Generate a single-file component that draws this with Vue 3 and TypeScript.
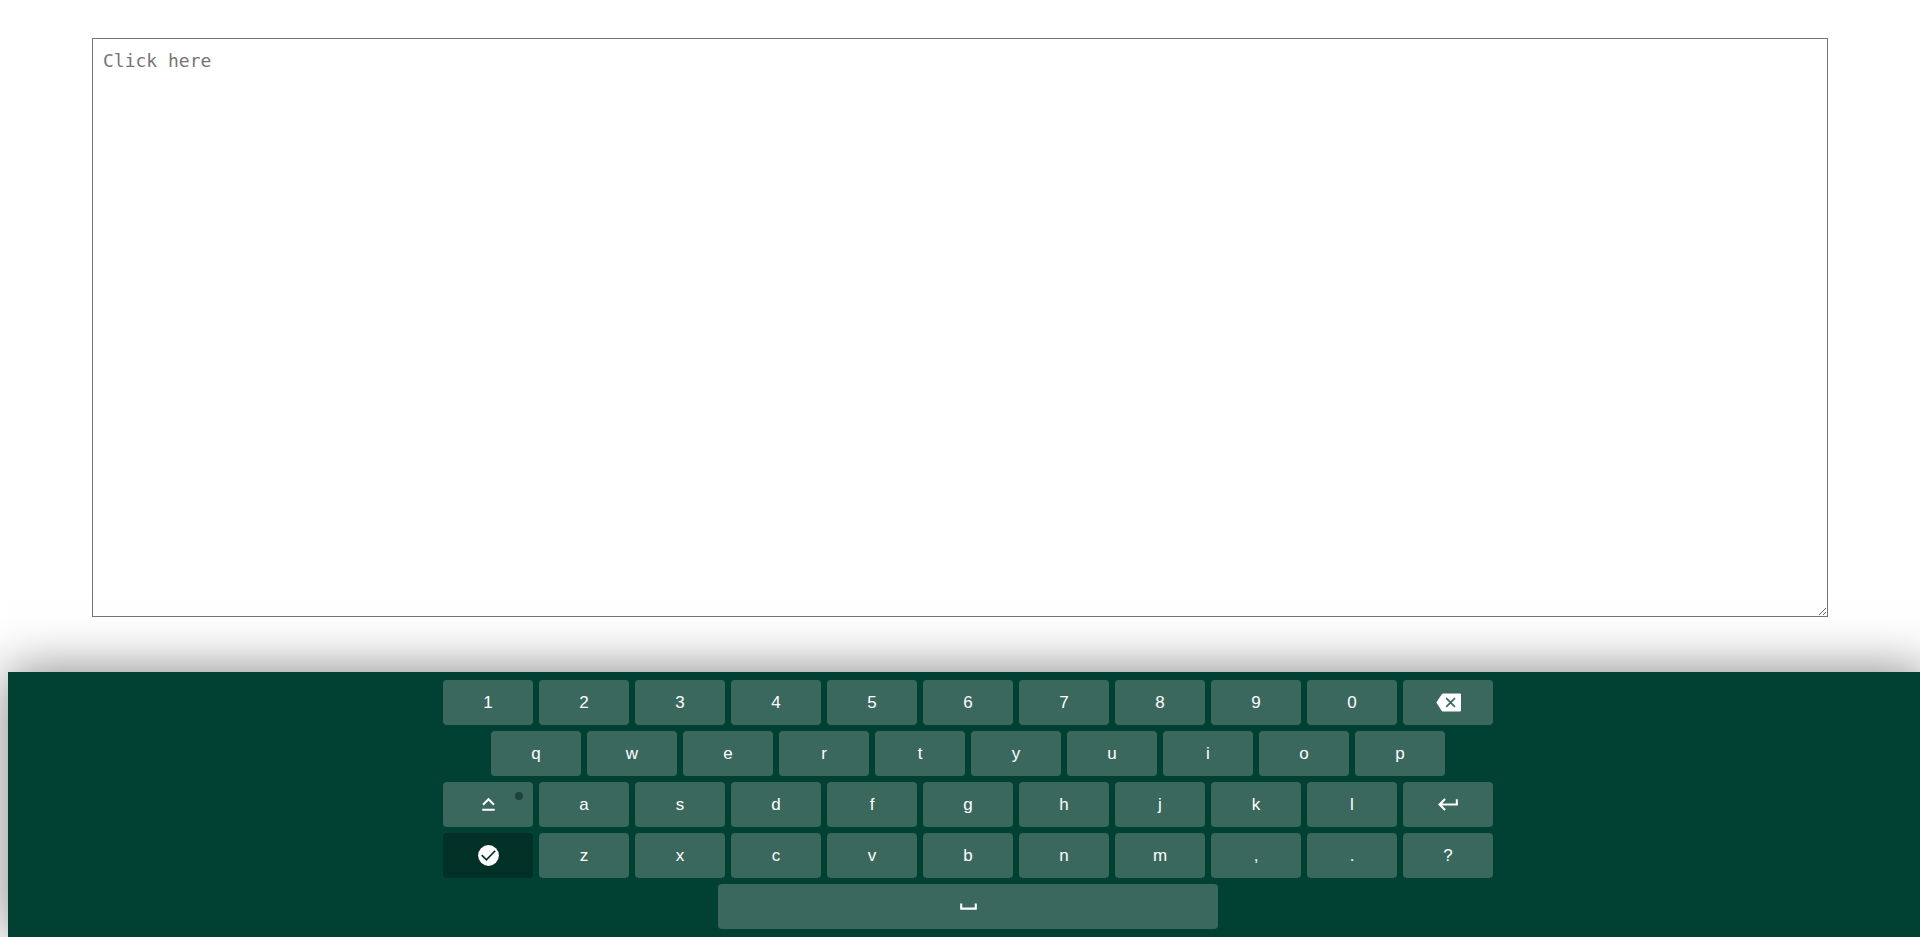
<script setup lang="ts">
import { ref } from 'vue'

interface Key {
  id: string
  label?: string
  kind?: 'backspace' | 'shift' | 'accept' | 'enter' | 'space'
}

const letters = (chars: string): Key[] => [...chars].map((c) => ({ id: c, label: c }))

const rows: Key[][] = [
  [...letters('1234567890'), { id: 'Backspace', kind: 'backspace' }],
  letters('qwertyuiop'),
  [{ id: 'Shift', kind: 'shift' }, ...letters('asdfghjkl'), { id: 'Enter', kind: 'enter' }],
  [{ id: 'Accept', kind: 'accept' }, ...letters('zxcvbnm,.?')],
  [{ id: 'Space', kind: 'space' }],
]

const text = ref('')
const upper = ref(false)

function press(key: Key) {
  if (key.kind === 'backspace') text.value = text.value.slice(0, -1)
  else if (key.kind === 'shift') upper.value = !upper.value
  else if (key.kind === 'enter') text.value += '\n'
  else if (key.kind === 'space') text.value += ' '
  else if (key.label) text.value += face(key)
}

function face(key: Key): string {
  const label = key.label ?? ''
  return upper.value ? label.toUpperCase() : label
}
</script>

<template>
  <main class="page">
    <textarea v-model="text" class="editor" placeholder="Click here" aria-label="Text"></textarea>
    <section class="keyboard" aria-label="Virtual keyboard">
      <div v-for="(row, i) in rows" :key="i" class="row">
        <button
          v-for="key in row"
          :key="key.id"
          type="button"
          class="key"
          :class="[key.kind, { on: key.kind === 'shift' && upper }]"
          :aria-label="key.kind ? key.id : undefined"
          @click="press(key)"
        >
          <template v-if="!key.kind">{{ face(key) }}</template>
          <svg v-else class="icon" viewBox="0 0 24 24" aria-hidden="true">
            <template v-if="key.kind === 'backspace'">
              <path d="M23 3.3H7Q6 3.3 5.4 4.2L.3 12l5.1 7.8q.6.9 1.6.9h16q1 0 1-1V4.3q0-1-1-1z" />
              <path class="cut" d="M9.8 7.8l8.4 8.4M18.2 7.8l-8.4 8.4" />
            </template>
            <path
              v-else-if="key.kind === 'shift'"
              d="M12 8.41L16.59 13 18 11.59l-6-6-6 6L7.41 13 12 8.41zM6 18h12v-2H6v2z"
            />
            <path
              v-else-if="key.kind === 'enter'"
              d="M19 7v4H5.83l3.58-3.59L8 6l-6 6 6 6 1.41-1.41L5.83 13H21V7z"
            />
            <template v-else-if="key.kind === 'accept'">
              <circle cx="12" cy="12" r="10" />
              <path class="cut" d="M5.5 11.7l4.5 4.5 8.4-8.8" />
            </template>
            <path v-else d="M18 9v4H6V9H4v6h16V9z" />
          </svg>
        </button>
      </div>
    </section>
  </main>
</template>

<style>
body {
  margin: 0;
  background: #fff;
}
</style>

<style scoped>
.page {
  display: flex;
  flex-direction: column;
  box-sizing: border-box;
  min-height: 100vh;
  padding-top: 38px;
  overflow: hidden;
}

.editor {
  flex: 1;
  min-height: 120px;
  box-sizing: border-box;
  margin: 0 92px 55px;
  padding: 10px;
  border: 1px solid #767676;
  border-radius: 0;
  background: #fff;
  color: #000;
  font: 18px/23px Consolas, "DejaVu Sans Mono", monospace;
}

.editor::placeholder {
  color: #757575;
}

.keyboard {
  position: relative;
  display: flex;
  flex-direction: column;
  gap: 6px;
  box-sizing: border-box;
  width: 100%;
  margin-left: 8px;
  padding: 8px;
  background: #004134;
  box-shadow: 0 0 50px rgba(0, 0, 0, 0.5);
}

.row {
  display: flex;
  justify-content: center;
  gap: 6px;
}

.key {
  position: relative;
  display: flex;
  align-items: center;
  justify-content: center;
  box-sizing: border-box;
  flex: 0 1 90px;
  min-width: 0;
  height: 45px;
  padding: 0;
  border: 0;
  border-radius: 4px;
  background: #3a685d;
  color: #fff;
  font: 17px/20px "Liberation Sans", Arial, sans-serif;
  cursor: pointer;
}

.key.accept {
  background: #003026;
}

.key.space {
  flex-basis: 500px;
}

.key.shift::after {
  content: "";
  position: absolute;
  top: 10px;
  right: 10px;
  width: 8px;
  height: 8px;
  border-radius: 50%;
  background: #20433a;
}

.key.shift.on::after {
  background: #80ffd8;
}

.icon {
  width: 25px;
  height: 25px;
  fill: currentColor;
}

.cut {
  fill: none;
  stroke: #3a685d;
  stroke-width: 1.6;
}

.accept .cut {
  stroke: #003026;
}
</style>
